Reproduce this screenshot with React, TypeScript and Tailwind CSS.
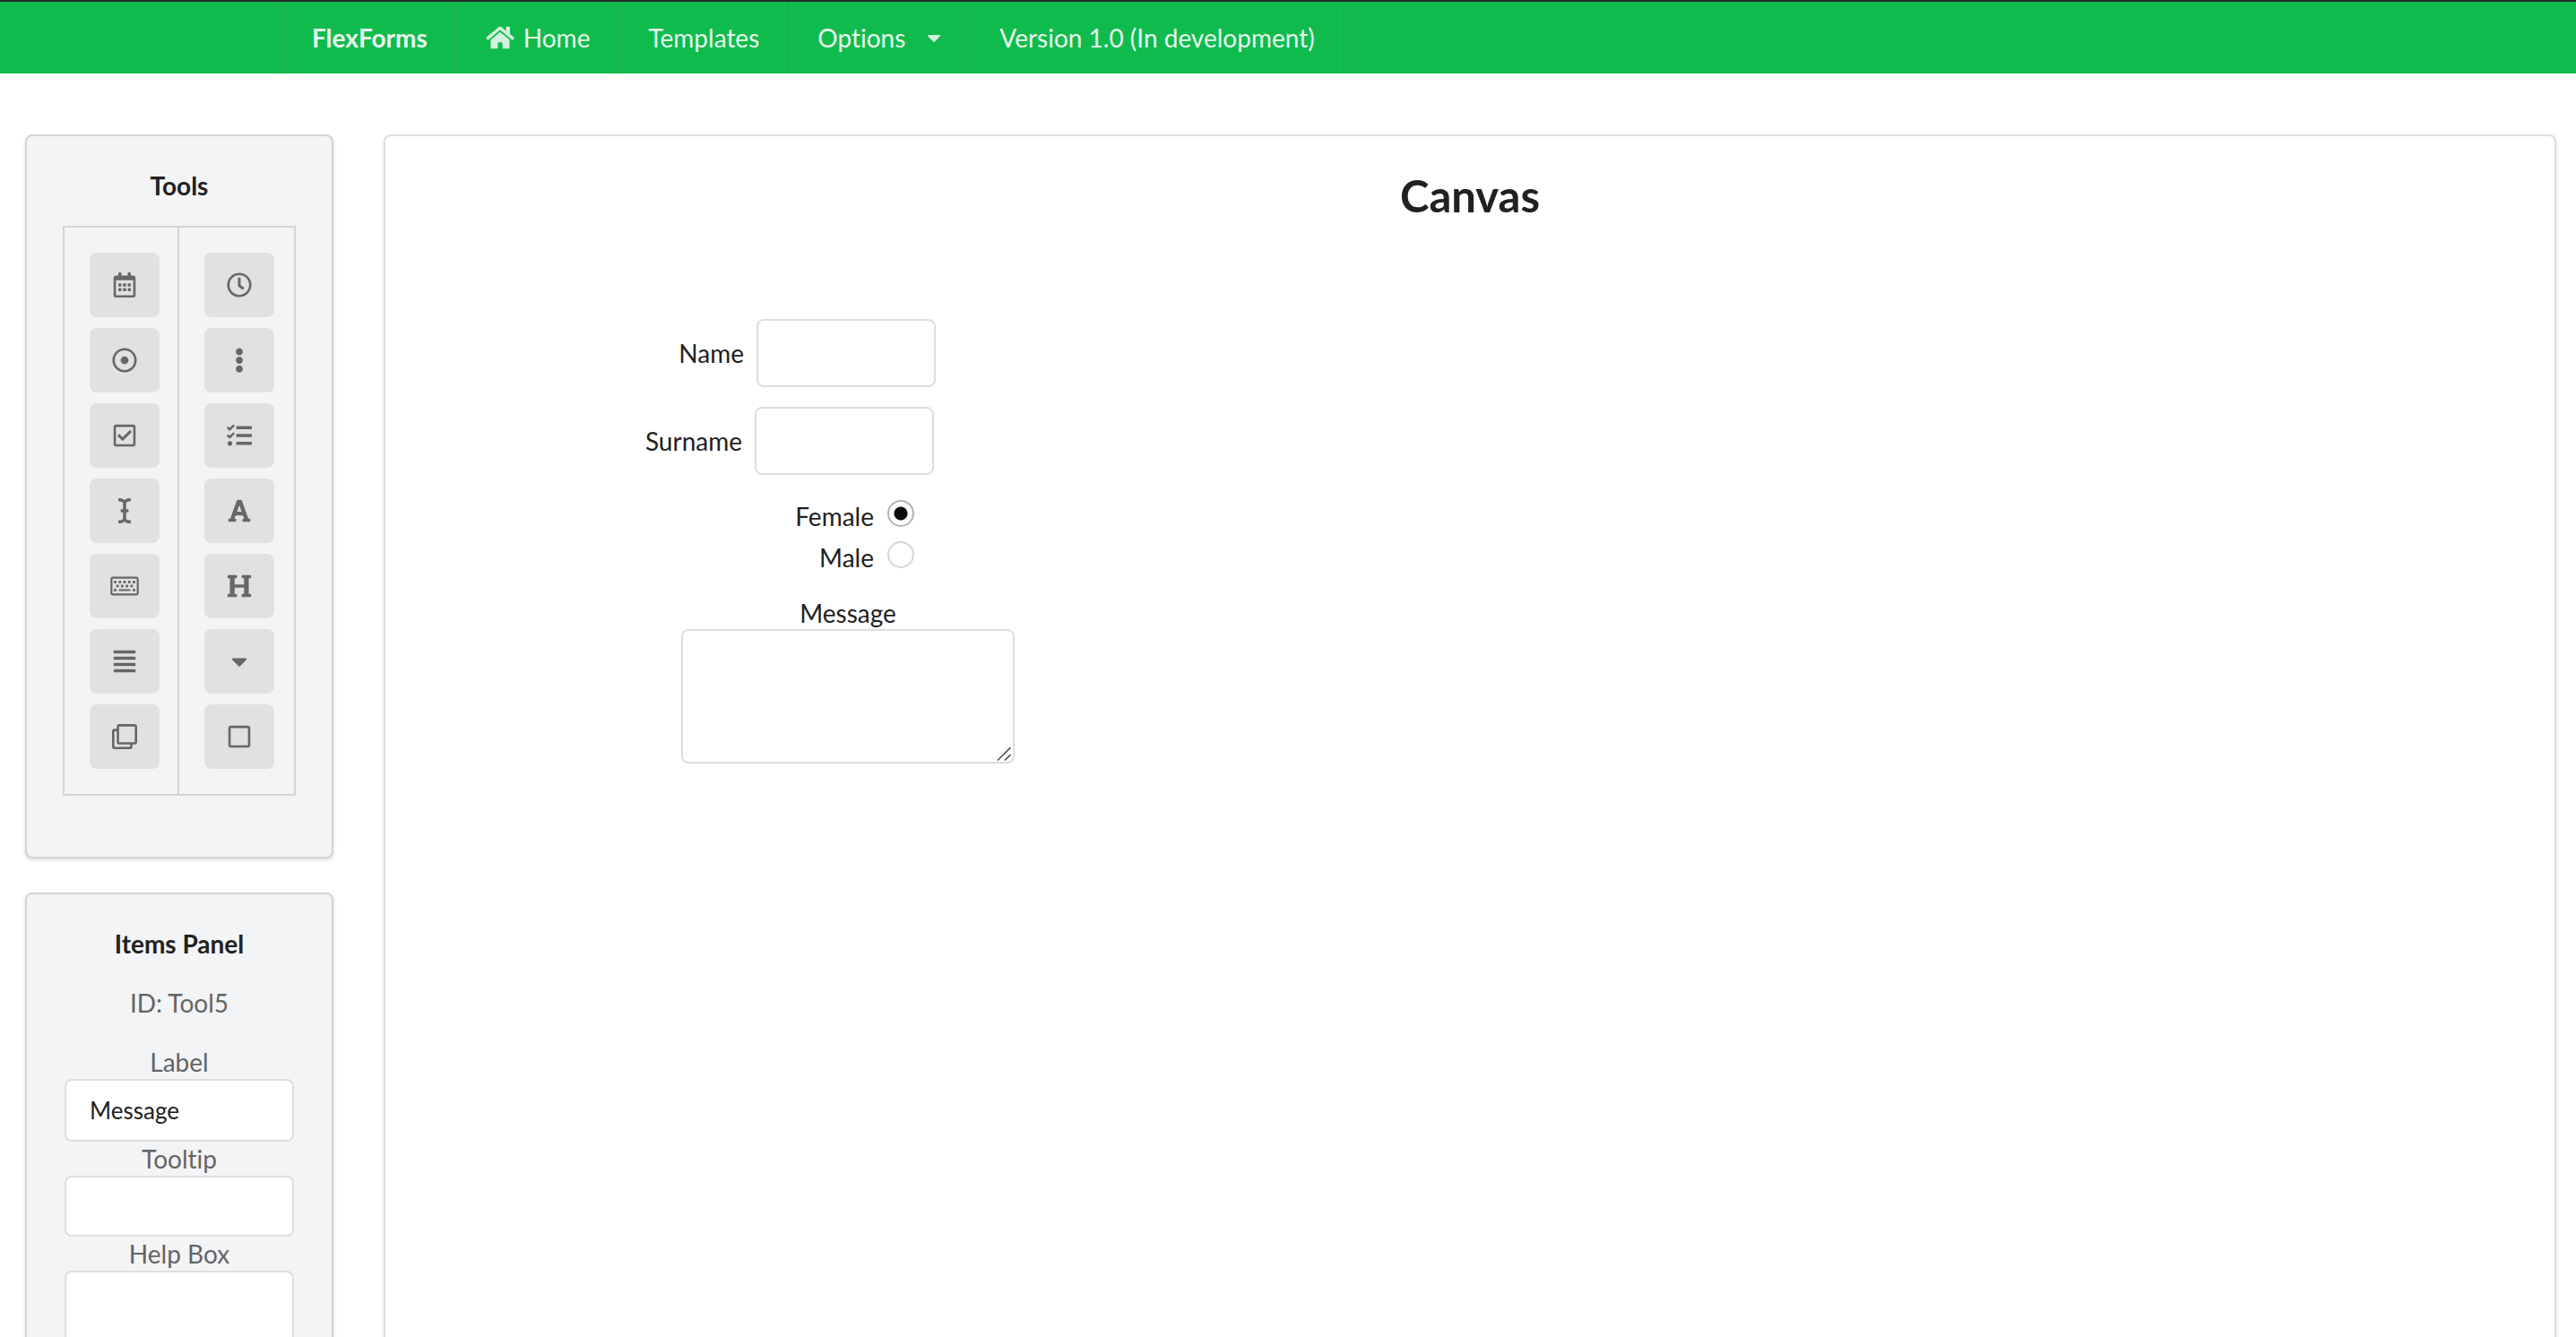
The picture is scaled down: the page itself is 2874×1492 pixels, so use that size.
import type { ReactNode } from "react";
import type { IconType } from "react-icons";
import {
  FaAlignJustify,
  FaCaretDown,
  FaEllipsisV,
  FaFont,
  FaHeading,
  FaHome,
  FaICursor,
  FaRegCalendarAlt,
  FaRegCheckSquare,
  FaRegClock,
  FaRegClone,
  FaRegDotCircle,
  FaRegKeyboard,
  FaRegSquare,
  FaTasks,
} from "react-icons/fa";

type Tool = { name: string; Icon: IconType };

const leftTools: Tool[] = [
  { name: "Date", Icon: FaRegCalendarAlt },
  { name: "Radio button", Icon: FaRegDotCircle },
  { name: "Checkbox", Icon: FaRegCheckSquare },
  { name: "Text input", Icon: FaICursor },
  { name: "Text area", Icon: FaRegKeyboard },
  { name: "Paragraph", Icon: FaAlignJustify },
  { name: "Group", Icon: FaRegClone },
];

const rightTools: Tool[] = [
  { name: "Time", Icon: FaRegClock },
  { name: "Radio group", Icon: FaEllipsisV },
  { name: "Checkbox group", Icon: FaTasks },
  { name: "Label", Icon: FaFont },
  { name: "Heading", Icon: FaHeading },
  { name: "Dropdown", Icon: FaCaretDown },
  { name: "Button", Icon: FaRegSquare },
];

const navItem =
  "flex items-center border-r-2 border-[#1fad4a] pr-[31px] pl-8 text-white/90 whitespace-nowrap";
const field =
  "rounded-lg border-2 border-[#dededf] bg-white text-[26px] text-[#212121] outline-none";

function NavBar() {
  return (
    <nav className="border-t-2 border-[#26292a] bg-[#10bb4e]">
      <div className="mx-auto flex h-20 w-full max-w-[2246px] border-l-2 border-[#1fad4a]">
        <a href="#" className={`${navItem} font-bold`}>
          FlexForms
        </a>
        <a href="#home" className={`${navItem} gap-2.5`}>
          <FaHome className="h-7 w-8 opacity-90" />
          Home
        </a>
        <a href="#templates" className={navItem}>
          Templates
        </a>
        <button type="button" className={`${navItem} gap-6`}>
          Options
          <FaCaretDown className="h-6 w-4 opacity-90" />
        </button>
        <a href="#version" className={navItem}>
          Version 1.0 (In development)
        </a>
      </div>
    </nav>
  );
}

function Panel({ title, children }: { title: string; children: ReactNode }) {
  return (
    <section className="rounded-lg border-2 border-[#d4d4d5] bg-[#f3f4f5] px-10 pt-[37px] pb-[68px] text-center shadow-[0_2px_4px_rgba(34,36,38,0.15)]">
      <h2 className="mb-[27px] leading-9 font-bold text-[#212121]">{title}</h2>
      {children}
    </section>
  );
}

function ToolColumn({ tools }: { tools: Tool[] }) {
  return (
    <div className="flex flex-col gap-3 py-7 pl-7">
      {tools.map(({ name, Icon }) => (
        <button
          key={name}
          type="button"
          aria-label={name}
          className="flex h-[72px] w-[78px] items-center justify-center rounded-lg bg-[#e0e1e2] text-[#676767]"
        >
          <Icon className="h-7 w-8" />
        </button>
      ))}
    </div>
  );
}

function CanvasForm() {
  return (
    <form className="ml-[286px] flex w-[416px] flex-col items-end text-[#212121]">
      <div className="mr-[88px] flex items-center gap-3.5">
        <label htmlFor="name">Name</label>
        <input id="name" type="text" className={`${field} h-[76px] w-[200px] px-7`} />
      </div>
      <div className="mt-[22px] mr-[90px] flex items-center gap-3.5">
        <label htmlFor="surname">Surname</label>
        <input id="surname" type="text" className={`${field} h-[76px] w-[200px] px-7`} />
      </div>
      <div className="mt-[26px] mr-28 flex flex-col items-end gap-1.5 leading-10">
        {["Female", "Male"].map((option) => (
          <label key={option} className="flex items-start gap-[15px]">
            {option}
            <input
              type="radio"
              name="gender"
              defaultChecked={option === "Female"}
              className="mt-0.5 size-[30px] appearance-none rounded-full border-2 border-[#d4d4d5] bg-white checked:border-[#b4b4b5] checked:bg-[radial-gradient(circle,#0d0d0d_7px,white_8px)]"
            />
          </label>
        ))}
      </div>
      <div className="mt-6 flex w-[372px] flex-col text-center">
        <label htmlFor="message" className="leading-9">
          Message
        </label>
        <div className="relative flex">
          <textarea id="message" className={`${field} h-[150px] w-full resize-none px-7 py-5`} />
          <svg
            viewBox="0 0 16 16"
            className="absolute right-1 bottom-[3px] size-4"
            fill="none"
            stroke="#4f4f4f"
            strokeWidth="1.6"
            aria-hidden="true"
          >
            <path d="M1 15.5L15.5 1M9 15.5L15.5 9" />
          </svg>
        </div>
      </div>
    </form>
  );
}

export default function App() {
  return (
    <div className="h-screen overflow-hidden bg-white font-[Lato,sans-serif] text-[28px] leading-10 [font-variant-ligatures:none]">
      <NavBar />
      <div className="flex gap-14 pt-[68px] pr-[22px] pl-7">
        <aside className="flex w-[344px] shrink-0 flex-col gap-[38px]">
          <Panel title="Tools">
            <div className="grid grid-cols-2 divide-x-2 divide-[#d4d4d5] border-2 border-[#d4d4d5]">
              <ToolColumn tools={leftTools} />
              <ToolColumn tools={rightTools} />
            </div>
          </Panel>
          <Panel title="Items Panel">
            <p className="mb-[26px] leading-[42px] text-[#646464]">ID: Tool5</p>
            <div className="flex flex-col px-0.5 leading-[38px] text-[#646464]">
              <label htmlFor="item-label">Label</label>
              <input
                id="item-label"
                type="text"
                defaultValue="Message"
                className={`${field} h-[70px] px-[26px]`}
              />
              <label htmlFor="item-tooltip">Tooltip</label>
              <input id="item-tooltip" type="text" className={`${field} h-[68px] px-[26px]`} />
              <label htmlFor="item-help">Help Box</label>
              <textarea id="item-help" className={`${field} h-[150px] resize-none px-[26px] py-5`} />
            </div>
          </Panel>
        </aside>
        <main className="flex-1 rounded-lg border-2 border-[#dededf] bg-white shadow-[0_2px_4px_rgba(34,36,38,0.15)]">
          <h1 className="mt-[35px] mb-[107px] text-center text-[49px] leading-[62px] font-bold text-[#212121]">
            Canvas
          </h1>
          <CanvasForm />
        </main>
      </div>
    </div>
  );
}
